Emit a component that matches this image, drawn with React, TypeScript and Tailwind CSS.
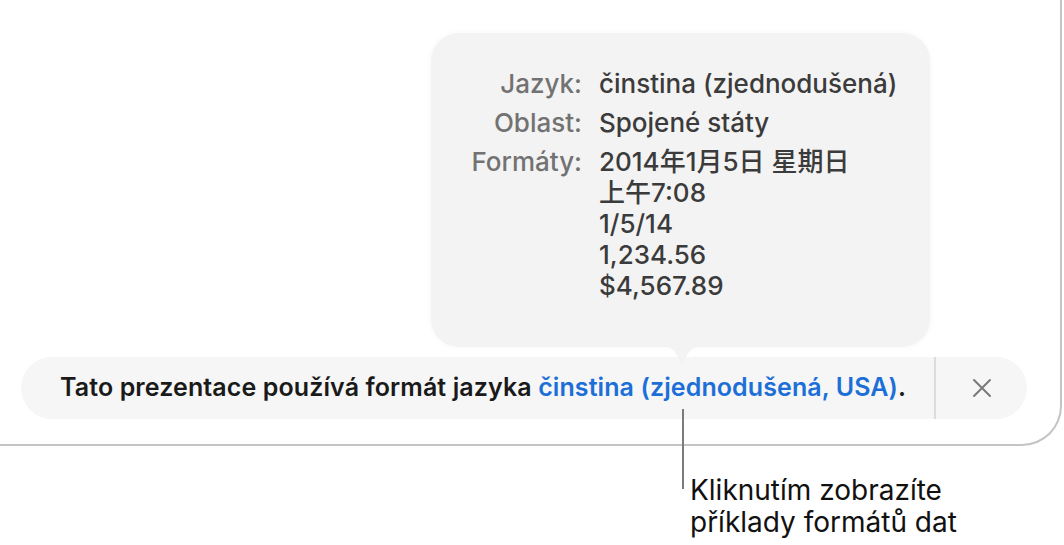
import React from "react";

const sans = "font-['Inter','Noto_Sans_CJK_SC',sans-serif]";

function FormatRow({ label, children }: { label: string; children: React.ReactNode }) {
  return (
    <>
      <div className="text-right text-[#727272]">{label}</div>
      <div className="text-[#3b3b3b]">{children}</div>
    </>
  );
}

function Popover() {
  return (
    <div className="absolute left-[431px] top-[33px] z-10 w-[499px]">
      <div className="h-[314px] rounded-[28px] bg-[#f3f3f3] pl-[30px] pt-[35px] shadow-[0_0_6px_rgba(0,0,0,0.04)]">
        <div className="grid grid-cols-[121px_auto] gap-x-[17px] gap-y-[8px] text-[26px] font-medium leading-[31px]">
          <FormatRow label="Jazyk:">činstina (zjednodušená)</FormatRow>
          <FormatRow label="Oblast:">Spojené státy</FormatRow>
          <FormatRow label="Formáty:">
            <div>2014年1月5日 星期日</div>
            <div>上午7:08</div>
            <div>1/5/14</div>
            <div>1,234.56</div>
            <div>$4,567.89</div>
          </FormatRow>
        </div>
      </div>
      {/* pointer down to the link */}
      <svg className="ml-[229px] -mt-px block" width="44" height="21" viewBox="0 0 44 21">
        <path d="M0 0 C10 0 13 3 17 9 L20 17 Q22 21 24 17 L27 9 C31 3 34 0 44 0 Z" fill="#f3f3f3" />
      </svg>
    </div>
  );
}

function Banner() {
  return (
    <div className="ml-[21px] flex h-[62px] w-[1006px] items-center rounded-full bg-[#f6f6f6]">
      <p className="flex-1 pl-[39px] text-[25px] font-semibold tracking-[0.1px] text-[#1a1a1a]">
        Tato prezentace používá formát jazyka{" "}
        <span className="text-[#1d6fd8]">činstina (zjednodušená, USA)</span>.
      </p>
      <div className="h-full w-[2px] bg-[#dcdcdc]" />
      <button className="flex w-[91px] items-center justify-center">
        <svg width="20" height="20" viewBox="0 0 20 20" fill="none" stroke="#7a7a7a" strokeWidth="2" strokeLinecap="round">
          <path d="M2 2 L18 18 M18 2 L2 18" />
        </svg>
      </button>
    </div>
  );
}

export default function App() {
  return (
    <div className={`relative h-[545px] w-[1064px] overflow-hidden bg-white ${sans}`}>
      <div className="relative h-[446px] w-[1062px] rounded-br-[40px] border-r-2 border-b-2 border-[#c4c4c4] pt-[357px]">
        <Popover />
        <Banner />
      </div>
      {/* callout */}
      <div className="absolute left-[682px] top-[409px] h-[80px] w-[2px] bg-[#7b7b7b]" />
      <div className="ml-[690px] mt-[28px] text-[28px] leading-[32px] text-[#111]">
        <div>Kliknutím zobrazíte</div>
        <div>příklady formátů dat</div>
      </div>
    </div>
  );
}
